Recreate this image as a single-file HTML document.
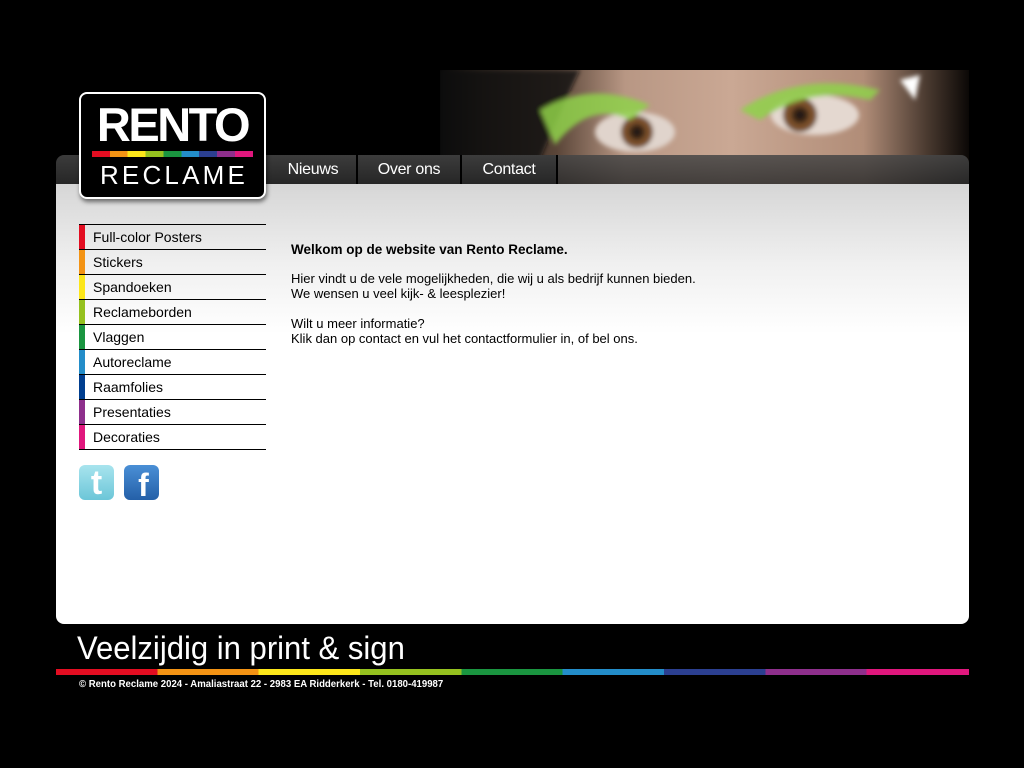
<!DOCTYPE html>
<html><head><meta charset="utf-8"><style>
*{margin:0;padding:0;box-sizing:border-box}
body{width:1024px;height:768px;background:#000;position:relative;overflow:hidden;font-family:"Liberation Sans",Arial,sans-serif}
.abs{position:absolute}
#panel{left:56px;top:184px;width:913px;height:440px;background:linear-gradient(#d6d6d6 0,#f0f0f0 80px,#fff 150px,#fff);border-radius:0 0 8px 8px}
#nav{left:56px;top:155px;width:913px;height:29px;border-radius:8px 8px 0 0}
.ni{position:absolute;top:155px;height:29px;color:#fff;font-size:16px;line-height:29px;text-align:center;border-right:2px solid #000;background:linear-gradient(#3c3c3c,#262626);letter-spacing:-0.3px}
#logo{left:79px;top:92px;width:187px;height:107px;background:#000;border:2px solid #fff;border-radius:8px;box-shadow:1px 3px 4px rgba(0,0,0,.5)}
.menu{left:79px;width:187px;height:25px;border-bottom:1px solid #000;font-size:14px;color:#000;line-height:25px;padding-left:14px}
.menu i{position:absolute;left:0;top:0;width:6px;height:24px}
.txt{left:291px;font-size:13px;line-height:15px;color:#000}
</style></head><body>
<svg class="abs" style="left:440px;top:70px" width="529" height="114" viewBox="0 0 529 114">
<defs>
<linearGradient id="sk" x1="0" x2="1"><stop offset="0" stop-color="#000"/><stop offset=".08" stop-color="#2a2019"/><stop offset=".22" stop-color="#5a4538"/><stop offset=".35" stop-color="#b89784"/><stop offset=".55" stop-color="#caa894"/><stop offset=".8" stop-color="#b18d78"/><stop offset=".92" stop-color="#4a3a30"/><stop offset="1" stop-color="#0b0806"/></linearGradient>
<radialGradient id="ir"><stop offset="0" stop-color="#111"/><stop offset=".35" stop-color="#3a2414"/><stop offset=".7" stop-color="#8a5a30"/><stop offset="1" stop-color="#5a3a20"/></radialGradient>
<filter id="bl"><feGaussianBlur stdDeviation="2.5"/></filter>
</defs>
<rect width="529" height="114" fill="url(#sk)"/>
<g filter="url(#bl)">
<path d="M0 0H140Q120 40 90 114H0Z" fill="#140f0c" opacity=".8"/>
<ellipse cx="195" cy="62" rx="40" ry="20" fill="#e0d4cc"/>
<circle cx="197" cy="62" r="16" fill="url(#ir)"/>
<ellipse cx="375" cy="45" rx="44" ry="20" fill="#e4d8d0"/>
<circle cx="360" cy="45" r="17" fill="url(#ir)"/>
<path d="M100 40Q150 10 210 35L190 50Q150 30 115 75Z" fill="#8fd14a" opacity=".85"/>
<path d="M300 40Q360 0 440 20L430 30Q370 15 320 50Z" fill="#8fd14a" opacity=".85"/>
<path d="M460 10L480 5 475 30Z" fill="#fff"/>
</g>
</svg>
<div class="abs" id="nav" style="background:linear-gradient(rgba(70,70,70,.85),rgba(45,45,45,.85))"></div>
<div class="abs" id="panel"></div>
<div class="ni" style="left:268px;width:90px;padding-left:2px">Nieuws</div>
<div class="ni" style="left:358px;width:104px">Over ons</div>
<div class="ni" style="left:462px;width:96px">Contact</div>
<div class="abs" id="logo">
 <div class="abs" style="left:0;top:5px;width:183px;text-align:center;color:#fff;font-weight:bold;font-size:47px;line-height:52px;letter-spacing:-2.5px">RENTO</div>
 <div class="abs" style="left:11px;top:57px;width:161px;height:6px;background:linear-gradient(90deg,#e30d21 0 11.1%,#f39314 11.1% 22.2%,#fce61a 22.2% 33.3%,#95c11f 33.3% 44.4%,#1a9540 44.4% 55.5%,#238dc9 55.5% 66.6%,#2b3f90 66.6% 77.7%,#8e2f8c 77.7% 88.8%,#e0177d 88.8%)"></div>
 <div class="abs" style="left:0;top:66px;width:183px;text-align:center;color:#fff;font-size:26px;line-height:30px;letter-spacing:3.2px;padding-left:3px">RECLAME</div>
</div>
<div class="abs" style="left:79px;top:224px;width:187px;border-top:1px solid #000"></div>
<div class="abs menu" style="top:225px"><i style="background:#e30d21"></i>Full-color Posters</div>
<div class="abs menu" style="top:250px"><i style="background:#f39314"></i>Stickers</div>
<div class="abs menu" style="top:275px"><i style="background:#fce61a"></i>Spandoeken</div>
<div class="abs menu" style="top:300px"><i style="background:#95c11f"></i>Reclameborden</div>
<div class="abs menu" style="top:325px"><i style="background:#1a9540"></i>Vlaggen</div>
<div class="abs menu" style="top:350px"><i style="background:#238dc9"></i>Autoreclame</div>
<div class="abs menu" style="top:375px"><i style="background:#003e8f"></i>Raamfolies</div>
<div class="abs menu" style="top:400px"><i style="background:#8e2f8c"></i>Presentaties</div>
<div class="abs menu" style="top:425px"><i style="background:#e0177d"></i>Decoraties</div>
<div class="abs" style="left:79px;top:465px;width:35px;height:35px;border-radius:6px;background:linear-gradient(#a8e4ee,#6cc6d8);color:#fff;font-weight:bold;font-size:34px;line-height:36px;text-align:center">t</div>
<div class="abs" style="left:124px;top:465px;width:35px;height:35px;border-radius:6px;background:linear-gradient(#4a8fd6,#2460a8);color:#fff;font-weight:bold;font-size:32px;line-height:40px;text-align:center;padding-left:4px">f</div>
<div class="abs txt" style="top:242px;font-size:13.5px;font-weight:bold;line-height:16px">Welkom op de website van Rento Reclame.</div>
<div class="abs txt" style="top:271px">Hier vindt u de vele mogelijkheden, die wij u als bedrijf kunnen bieden.<br>We wensen u veel kijk- &amp; leesplezier!<br><br>Wilt u meer informatie?<br>Klik dan op contact en vul het contactformulier in, of bel ons.</div>
<div class="abs" style="left:77px;top:628px;color:#fff;font-size:32px;line-height:40px;transform:scaleX(.97);transform-origin:left;letter-spacing:0">Veelzijdig in print &amp; sign</div>
<div class="abs" style="left:56px;top:669px;width:913px;height:6px;background:linear-gradient(90deg,#e30d21 0 11.1%,#f39314 11.1% 22.2%,#fce61a 22.2% 33.3%,#95c11f 33.3% 44.4%,#1a9540 44.4% 55.5%,#238dc9 55.5% 66.6%,#2b3f90 66.6% 77.7%,#8e2f8c 77.7% 88.8%,#e0177d 88.8%)"></div>
<div class="abs" style="left:79px;top:679px;color:#fff;font-size:10px;line-height:12px;font-weight:bold;transform:scaleX(.96);transform-origin:left">© Rento Reclame 2024 - Amaliastraat 22 - 2983 EA Ridderkerk - Tel. 0180-419987</div>
</body></html>
